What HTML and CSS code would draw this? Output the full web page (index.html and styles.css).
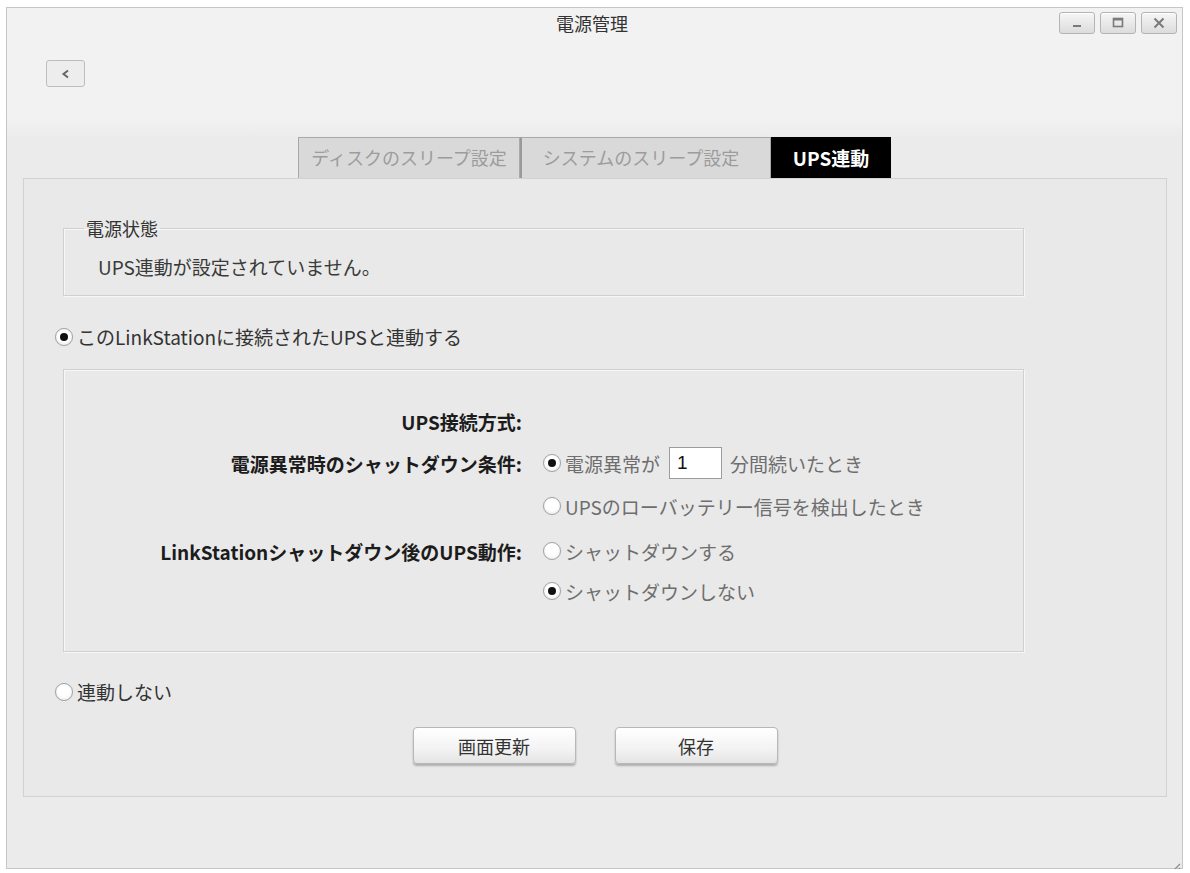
FILE: index.html
```html
<!DOCTYPE html>
<html lang="ja">
<head>
  <meta charset="UTF-8" />
  <meta name="viewport" content="width=device-width, initial-scale=1" />
  <title>電源管理</title>
  <link rel="stylesheet" href="styles.css">
</head>
<body>
  <div class="window">
    <div class="titlebar">
      <span></span>
      <div class="title">電源管理</div>
      <div class="win-controls">
        <button class="win-btn" title="最小化">
          <svg width="14" height="12" viewBox="0 0 14 12"><rect x="3" y="8" width="8" height="2" fill="#7a7a7a"/></svg>
        </button>
        <button class="win-btn" title="最大化">
          <svg width="14" height="12" viewBox="0 0 14 12"><rect x="2.5" y="1.5" width="9" height="8" fill="none" stroke="#7a7a7a" stroke-width="1.6"/><rect x="2.5" y="1.5" width="9" height="2" fill="#7a7a7a"/></svg>
        </button>
        <button class="win-btn" title="閉じる">
          <svg width="14" height="12" viewBox="0 0 14 12"><path d="M2.5 1.5 L11.5 10.5 M11.5 1.5 L2.5 10.5" stroke="#7a7a7a" stroke-width="2" fill="none"/></svg>
        </button>
      </div>
    </div>

    <div class="toolbar">
      <button class="back-btn">
        <svg width="12" height="12" viewBox="0 0 12 12"><path d="M8 2.5 L3.5 6 L8 9.5" stroke="#666" stroke-width="2" fill="none"/></svg>
      </button>
    </div>

    <div class="tabs">
      <div class="tab tab-disk">ディスクのスリープ設定</div>
      <div class="tab tab-system">システムのスリープ設定</div>
      <div class="tab tab-ups active">UPS連動</div>
    </div>

    <div class="panel">
      <fieldset class="status">
        <legend>電源状態</legend>
        <p>UPS連動が設定されていません。</p>
      </fieldset>

      <div class="radio-line">
        <span class="radio checked"></span>
        <span>このLinkStationに接続されたUPSと連動する</span>
      </div>

      <div class="ups-box">
        <div class="ups-grid">
          <div class="label">UPS接続方式:</div>
          <div></div>

          <div class="label">電源異常時のシャットダウン条件:</div>
          <div class="opt">
            <span class="radio checked"></span>
            <span>電源異常が</span>
            <input class="minutes" type="text" value="1" />
            <span>分間続いたとき</span>
          </div>

          <div></div>
          <div class="opt">
            <span class="radio"></span>
            <span>UPSのローバッテリー信号を検出したとき</span>
          </div>

          <div class="label">LinkStationシャットダウン後のUPS動作:</div>
          <div class="opt">
            <span class="radio"></span>
            <span>シャットダウンする</span>
          </div>

          <div></div>
          <div class="opt">
            <span class="radio checked"></span>
            <span>シャットダウンしない</span>
          </div>
        </div>
      </div>

      <div class="radio-line no-link">
        <span class="radio"></span>
        <span>連動しない</span>
      </div>

      <div class="actions">
        <button class="btn">画面更新</button>
        <button class="btn">保存</button>
      </div>
    </div>

    <div class="grip">
      <svg width="14" height="14" viewBox="0 0 14 14"><path d="M13 3 L3 13 M13 7 L7 13 M13 11 L11 13" stroke="#8a8a8a" stroke-width="1.2"/></svg>
    </div>
  </div>
</body>
</html>
```

FILE: styles.css
```css
* {
  box-sizing: border-box;
}
body {
  margin: 0;
  padding: 7px 0 0 6px;
  background: #fff;
  font-family: "Noto Sans CJK JP", "Noto Sans", sans-serif;
  font-size: 19px;
  color: #333;
}
.window {
  position: relative;
  width: 1177px;
  height: 862px;
  border: 1px solid #c6c6c6;
  background: linear-gradient(#f2f2f2 0, #f2f2f2 110px, #ebebeb 130px, #ebebeb 100%);
  display: flex;
  flex-direction: column;
}
.titlebar {
  display: grid;
  grid-template-columns: 1fr auto 1fr;
  height: 52px;
  padding: 4px 5px 0 0;
}
.title {
  font-size: 18px;
  line-height: 22px;
  color: #333;
}
.win-controls {
  justify-self: end;
  display: flex;
  gap: 5px;
}
.win-btn {
  width: 36px;
  height: 22px;
  padding: 0;
  border: 1px solid #b4b4b4;
  border-radius: 3px;
  background: linear-gradient(#f6f6f6, #dcdcdc);
  box-shadow: inset 0 1px 0 #fff;
  display: flex;
  align-items: center;
  justify-content: center;
}
.toolbar {
  padding-left: 39px;
}
.back-btn {
  width: 39px;
  height: 27px;
  padding: 0;
  border: 1px solid #bdbdbd;
  border-radius: 3px;
  background: #ededed;
  display: flex;
  align-items: center;
  justify-content: center;
}
.tabs {
  margin-top: 50px;
  display: flex;
  justify-content: center;
  height: 41px;
}
.tab {
  border: 1px solid #a9a9a9;
  background: #d9d9d9;
  color: #9c9c9c;
  font-size: 18px;
  line-height: 39px;
  text-align: center;
  border-bottom: none;
}
.tab-disk {
  width: 222px;
}
.tab-system {
  width: 251px;
  border-left: 2px solid #9a9a9a;
  padding-right: 10px;
}
.tab-ups {
  width: 120px;
  font-size: 19px;
}
.tab.active {
  background: #000;
  border-color: #000;
  color: #fff;
  font-weight: bold;
}
.panel {
  height: 619px;
  margin: 0 15px 0 16px;
  border: 1px solid #d2d2d2;
  background: #e9e9e9;
  padding: 40px 142px 0 31px;
}
.status {
  margin: 0 0 0 8px;
  padding: 0 0 16px 20px;
  border: 1px solid #d0d0d0;
  box-shadow: inset 1px 1px 0 #f7f7f7, 1px 1px 0 #f7f7f7;
}
.status legend {
  padding: 0 2px;
  font-size: 18px;
  line-height: 18px;
  color: #333;
}
.status p {
  margin: 18px 0 0 14px;
  line-height: 24px;
  color: #3a3a3a;
}
.radio-line {
  display: flex;
  align-items: center;
  gap: 4px;
  margin-top: 29px;
  line-height: 24px;
  color: #333;
}
.radio {
  flex: none;
  width: 18px;
  height: 18px;
  border-radius: 50%;
  border: 1px solid #a2a2a2;
  background: radial-gradient(circle at 50% 40%, #fff 45%, #e6e6e6 100%);
  box-shadow: 0 0 1px #cfcfcf;
  display: inline-flex;
  align-items: center;
  justify-content: center;
}
.radio.checked::after {
  content: "";
  width: 8px;
  height: 8px;
  border-radius: 50%;
  background: #111;
}
.ups-box {
  margin: 20px 0 0 8px;
  height: 283px;
  border: 1px solid #d0d0d0;
  box-shadow: inset 1px 1px 0 #f7f7f7, 1px 1px 0 #f7f7f7;
  padding-top: 30px;
}
.ups-grid {
  display: grid;
  grid-template-columns: 458px 1fr;
  grid-template-rows: 42px 42px 44px 46px 34px;
  column-gap: 21px;
  align-items: center;
}
.label {
  text-align: right;
  font-weight: bold;
  color: #1c1c1c;
}
.opt {
  display: flex;
  align-items: center;
  gap: 4px;
  color: #6e6e6e;
}
.minutes {
  width: 53px;
  height: 32px;
  margin: 0 4px 0 5px;
  padding: 0 7px;
  border: 1px solid #9c9c9c;
  background: #fff;
  font-family: "Liberation Sans", sans-serif;
  font-size: 19px;
  color: #111;
}
.no-link {
  margin-top: 28px;
}
.actions {
  margin-top: 23px;
  display: flex;
  justify-content: center;
  gap: 39px;
  padding-left: 111px;
}
.btn {
  width: 163px;
  height: 37px;
  border: 1px solid #b8b8b8;
  border-radius: 4px;
  background: linear-gradient(#ffffff, #f3f3f3 60%, #e4e4e4);
  box-shadow: 0 2px 2px rgba(0, 0, 0, 0.25);
  font-family: "Noto Sans CJK JP", sans-serif;
  font-size: 18px;
  color: #333;
}
.grip {
  position: absolute;
  right: 1px;
  bottom: 1px;
  width: 14px;
  height: 14px;
}
```
